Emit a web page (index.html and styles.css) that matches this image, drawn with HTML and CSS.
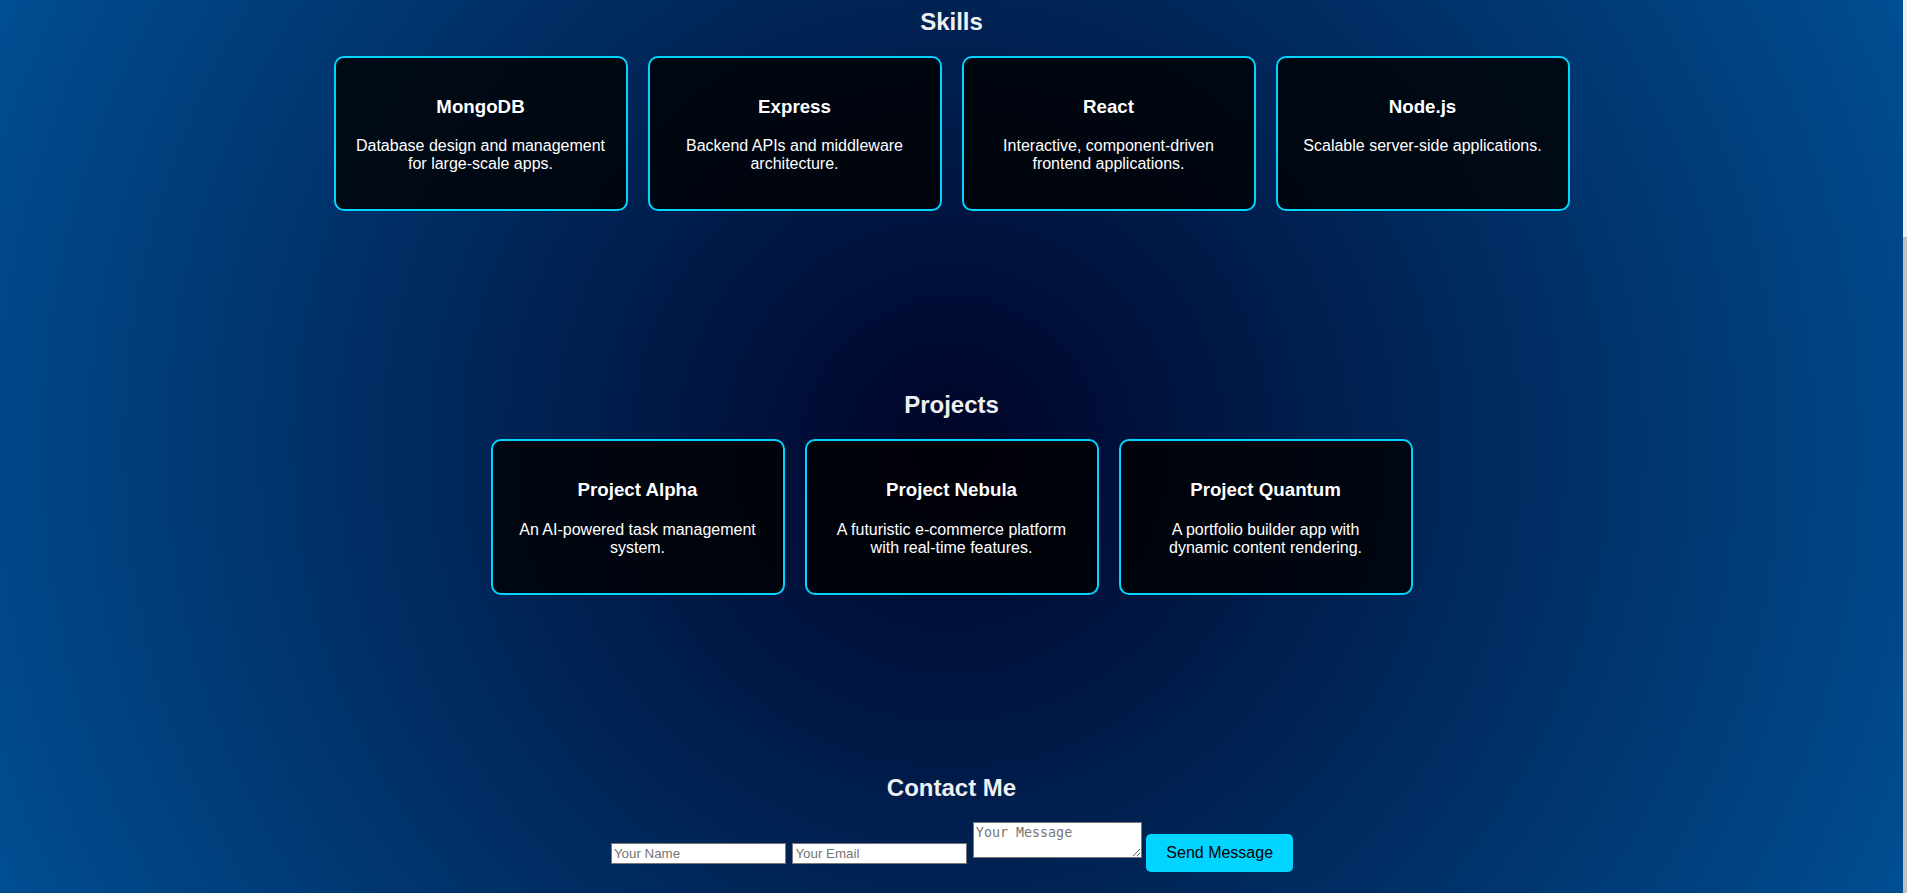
FILE: index.html
```html
<!DOCTYPE html>
<html lang="en">
<head>
<meta charset="UTF-8">
<title>Portfolio</title>
<link rel="stylesheet" href="styles.css">
</head>
<body>
<section class="section section--first" id="skills">
  <h2 class="section__title">Skills</h2>
  <div class="cards">
    <div class="card"><h3 class="card__title">MongoDB</h3><p class="card__text">Database design and management for large-scale apps.</p></div>
    <div class="card"><h3 class="card__title">Express</h3><p class="card__text">Backend APIs and middleware architecture.</p></div>
    <div class="card"><h3 class="card__title">React</h3><p class="card__text">Interactive, component-driven frontend applications.</p></div>
    <div class="card"><h3 class="card__title">Node.js</h3><p class="card__text">Scalable server-side applications.</p></div>
  </div>
</section>
<section class="section" id="projects">
  <h2 class="section__title">Projects</h2>
  <div class="cards">
    <div class="card"><h3 class="card__title">Project Alpha</h3><p class="card__text">An AI-powered task management system.</p></div>
    <div class="card"><h3 class="card__title">Project Nebula</h3><p class="card__text">A futuristic e-commerce platform with real-time features.</p></div>
    <div class="card"><h3 class="card__title">Project Quantum</h3><p class="card__text">A portfolio builder app with dynamic content rendering.</p></div>
  </div>
</section>
<section class="section section--last" id="contact">
  <h2 class="section__title">Contact Me</h2>
  <form class="contact-form">
    <input class="contact-form__field" type="text" placeholder="Your Name">
    <input class="contact-form__field" type="email" placeholder="Your Email">
    <textarea class="contact-form__message" placeholder="Your Message"></textarea>
    <button class="contact-form__button" type="submit">Send Message</button>
  </form>
</section>
</body>
</html>
```
FILE: styles.css
```css
html {
  background:
    linear-gradient(#f1f1f1 0, #f1f1f1 237px, #c1c1c1 237px, #c1c1c1 100%) right top / 4px 100% no-repeat fixed,
    radial-gradient(circle, #000428, #004e92) left top / calc(100% - 4px) 100% no-repeat fixed;
  background-color: #004e92;
}
body {
  margin: 0 4px 0 0;
  font-family: "Liberation Sans", Arial, sans-serif;
  color: #ffffff;
  min-height: 100vh;
}
.section {
  padding: 80px 20px;
  text-align: center;
}
.section--first {
  padding-top: 1px;
}
.section--first .section__title {
  margin-top: 7px;
}
.section--last {
  padding-top: 79px;
  padding-bottom: 10px;
}
.section__title {
  font-size: 24px;
  font-weight: bold;
  color: #f0f0f2;
  margin: 20px 0 20px;
}
.cards {
  display: flex;
  justify-content: center;
  flex-wrap: wrap;
  gap: 20px;
}
.card {
  width: 250px;
  padding: 19px 20px 20px;
  border: 2px solid #00d4ff;
  border-radius: 10px;
  background: rgba(0, 0, 0, 0.8);
}
.card__title {
  font-size: 18.72px;
  margin: 18.72px 0 19.72px;
  color: #ffffff;
}
.card__text {
  font-size: 16px;
  margin: 16px 0;
  color: #ffffff;
}
.contact-form {
  font-size: 16px;
}
.contact-form__field {
  width: 175px;
  height: 21px;
  box-sizing: border-box;
  padding: 1px 2px;
  border: 1px solid #767676;
  font: 13.333px "Liberation Sans", Arial, sans-serif;
  margin: 0 1px;
  background: #ffffff;
}
.contact-form__message {
  width: 169px;
  height: 36px;
  box-sizing: border-box;
  padding: 2px;
  border: 1px solid #767676;
  font: 13.333px "DejaVu Sans Mono", "Liberation Mono", monospace;
  margin: 0;
  background: #ffffff;
}
.contact-form__button {
  padding: 10px 20px;
  font: 16px "Liberation Sans", Arial, sans-serif;
  color: #000000;
  background: #00d4ff;
  border: none;
  border-radius: 5px;
  margin: 0;
  cursor: pointer;
}
```
